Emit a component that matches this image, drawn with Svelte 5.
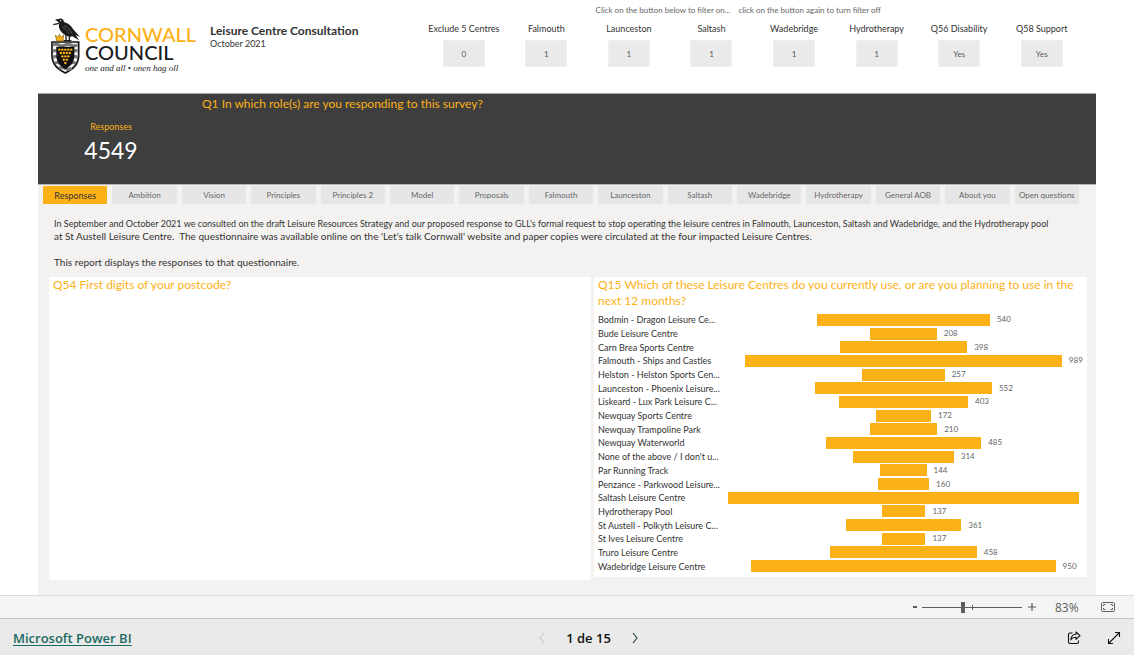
<script>
  const filters = [
    { label: 'Exclude 5 Centres', value: '0' },
    { label: 'Falmouth', value: '1' },
    { label: 'Launceston', value: '1' },
    { label: 'Saltash', value: '1' },
    { label: 'Wadebridge', value: '1' },
    { label: 'Hydrotherapy', value: '1' },
    { label: 'Q56 Disability', value: 'Yes' },
    { label: 'Q58 Support', value: 'Yes' }
  ];

  const tabs = [
    'Responses', 'Ambition', 'Vision', 'Principles', 'Principles 2', 'Model',
    'Proposals', 'Falmouth', 'Launceston', 'Saltash', 'Wadebridge',
    'Hydrotherapy', 'General AOB', 'About you', 'Open questions'
  ];
  let active = $state('Responses');
  let zoom = $state(41);

  const max = 1096;
  const centres = [
    ['Bodmin - Dragon Leisure Ce...', 540],
    ['Bude Leisure Centre', 208],
    ['Carn Brea Sports Centre', 398],
    ['Falmouth - Ships and Castles', 989],
    ['Helston - Helston Sports Cen...', 257],
    ['Launceston - Phoenix Leisure...', 552],
    ['Liskeard - Lux Park Leisure C...', 403],
    ['Newquay Sports Centre', 172],
    ['Newquay Trampoline Park', 210],
    ['Newquay Waterworld', 485],
    ["None of the above / I don't u...", 314],
    ['Par Running Track', 144],
    ['Penzance - Parkwood Leisure...', 160],
    ['Saltash Leisure Centre', 1096],
    ['Hydrotherapy Pool', 137],
    ['St Austell - Polkyth Leisure C...', 361],
    ['St Ives Leisure Centre', 137],
    ['Truro Leisure Centre', 458],
    ['Wadebridge Leisure Centre', 950]
  ];

  // Gold roundels on the shield: rows of 5, 4, 3, 2, 1
  const roundels = [5, 4, 3, 2, 1].flatMap((n, r) =>
    Array.from({ length: n }, (_, i) => ({ x: 43 + (i - (n - 1) / 2) * 9, y: 95 + r * 10 }))
  );
</script>

<div class="page">
  <main class="report">
    <header class="top">
      <div class="logo">
        <svg class="crest" viewBox="0 0 90 168" aria-hidden="true">
          <path d="M3 72H83V112C83 138 68 154 43 165C18 154 3 138 3 112Z" fill="#f4f4f4" stroke="#111" stroke-width="5" />
          <path d="M6 81q9-5 18 0t18 0t18 0t20 0M6 100q8-5 14 0M66 100q8-5 14 0M6 118q8-5 15 0M65 118q8-5 14 0M11 136q8-5 17 0M57 136q9-5 17 0M24 151q9-5 19 0t19 0" fill="none" stroke="#777" stroke-width="9" />
          <path d="M16 86H70V110C70 132 60 144 43 153C26 144 16 132 16 110Z" fill="#111" />
          {#each roundels as c}
            <circle cx={c.x} cy={c.y} r="3.600" fill="#fcb116" />
          {/each}
          <path d="M13 51L20 58L25 49L30 58L38 51L36 69H17Z" fill="#fcb116" stroke="#8a610c" stroke-width="2" />
          <path d="M12 6C16 3 20 2 24 3C32 -1 38 5 39 12C50 15 60 22 66 33L87 57L74 51L84 67L64 55C54 58 44 53 38 48C27 40 20 26 25 16C21 10 17 8 12 6Z" fill="#1b1b1d" />
          <path d="M39 23C50 26 58 36 63 46M33 27C42 30 49 38 54 46" fill="none" stroke="#777" stroke-width="2" />
          <path d="M24 16L7 20M45 49V66M55 52V66M38 68H61" fill="none" stroke="#1b1b1d" stroke-width="4" />
          <circle cx="29" cy="8" r="2" fill="#fff" />
        </svg>
        <div class="wordmark">
          <span class="gold">CORNWALL</span>
          <span>COUNCIL</span>
          <em>one and all • onen hag oll</em>
        </div>
      </div>
      <div class="heading">
        <h1>Leisure Centre Consultation</h1>
        <p>October 2021</p>
      </div>
      <section class="filters" aria-label="Filters">
        <p class="hint"><span>Click on the button below to filter on...</span><span>click on the button again to turn filter off</span></p>
        <div class="filter-grid">
          {#each filters as f, i}
            <div class="filter">
              <span id="filter-{i}">{f.label}</span>
              <button type="button" aria-labelledby="filter-{i}">{f.value}</button>
            </div>
          {/each}
        </div>
      </section>
    </header>

    <section class="band">
      <div class="card">
        <span>Responses</span>
        <strong>4549</strong>
      </div>
      <h2>Q1 In which role(s) are you responding to this survey?</h2>
    </section>

    <section class="body">
      <nav class="tabs" aria-label="Report pages">
        {#each tabs as t}
          <button type="button" class:active={active === t} onclick={() => (active = t)}>{t}</button>
        {/each}
      </nav>

      <div class="intro">
        <p><small>In September and October 2021 we consulted on the draft Leisure Resources Strategy and our proposed response to GLL's formal request to stop operating the leisure centres in Falmouth, Launceston, Saltash and Wadebridge, and the Hydrotherapy pool</small><br />at St Austell Leisure Centre.&nbsp; The questionnaire was available online on the 'Let's talk Cornwall' website and paper copies were circulated at the four impacted Leisure Centres.</p>
        <p>This report displays the responses to that questionnaire.</p>
      </div>

      <div class="panels">
        <section class="panel map">
          <h2>Q54 First digits of your postcode?</h2>
        </section>
        <section class="panel">
          <h2>Q15 Which of these Leisure Centres do you currently use, or are you planning to use in the next 12 months?</h2>
          <ul class="chart">
            {#each centres as [name, n]}
              <li>
                <span class="name">{name}</span>
                <div class="track" style="--w: {(n / max) * 100}%">
                  <span class="bar"></span>
                  {#if n < max}<span class="value">{n}</span>{/if}
                </div>
              </li>
            {/each}
          </ul>
        </section>
      </div>
    </section>
  </main>

  <div class="status">
    <button type="button" class="step" aria-label="Zoom out">
      <svg viewBox="0 0 10 10"><path d="M3 5H7" stroke="#605e5c" stroke-width="2" /></svg>
    </button>
    <input type="range" min="0" max="100" bind:value={zoom} aria-label="Zoom level" />
    <button type="button" class="step" aria-label="Zoom in">
      <svg viewBox="0 0 10 10"><path d="M1 5H9M5 1V9" stroke="#605e5c" stroke-width="1.200" /></svg>
    </button>
    <span class="percent">83%</span>
    <button type="button" class="fit" aria-label="Fit to page">
      <svg viewBox="0 0 14 10" fill="none" stroke="#605e5c">
        <rect x=".5" y=".5" width="13" height="9" rx="1" />
        <path d="M4.500 2.500H2.500V4M2.500 6V7.500H4.500M9.500 2.500H11.500V4M11.500 6V7.500H9.500" />
      </svg>
    </button>
  </div>

  <footer>
    <a href="#powerbi">Microsoft Power BI</a>
    <div class="pager">
      <button type="button" disabled aria-label="Previous page">
        <svg viewBox="0 0 8 12"><path d="M6 1L2 6L6 11" fill="none" stroke="#bdbdbd" /></svg>
      </button>
      <span>1 de 15</span>
      <button type="button" aria-label="Next page">
        <svg viewBox="0 0 8 12"><path d="M2 1L6 6L2 11" fill="none" stroke="#2b4a48" stroke-width="1.200" /></svg>
      </button>
    </div>
    <div class="actions">
      <button type="button" aria-label="Share">
        <svg viewBox="0 0 14 14" fill="none" stroke="#111" stroke-width="1.100" stroke-linejoin="round">
          <path d="M5.500 2H3Q1.500 2 1.500 3.500V11Q1.500 12.500 3 12.500H10Q11.500 12.500 11.500 11V9.500" />
          <path d="M9 1L13 4.700L9 8.300V6.200C6.500 6.100 5 7 3.800 8.800C4.200 5.500 6 3.300 9 3.200Z" />
        </svg>
      </button>
      <button type="button" aria-label="Full screen">
        <svg viewBox="0 0 14 14" fill="none" stroke="#111" stroke-width="1.100">
          <path d="M1.500 12.500L12.500 1.500M8 1.500H12.500V6M1.500 8V12.500H6" />
        </svg>
      </button>
    </div>
  </footer>
</div>

<style>
  :global(body) {
    background: #fff;
  }
  .page {
    min-height: 100vh;
    display: flex;
    flex-direction: column;
    font-family: Lato, 'Liberation Sans', sans-serif;
    color: #333;
  }
  h1, h2, p, ul {
    margin: 0;
    padding: 0;
    font-weight: 400;
  }
  button {
    border: 0;
    padding: 0;
    font: inherit;
    color: inherit;
    background: none;
  }
  svg {
    display: block;
  }
  .report {
    flex: 1;
    margin: 0 38px;
    display: flex;
    flex-direction: column;
  }

  .top {
    display: flex;
    height: 93px;
    padding: 0 13px;
    box-sizing: border-box;
  }
  .logo {
    display: flex;
    gap: 4px;
    padding-top: 18px;
    width: 159px;
    flex: none;
  }
  .crest {
    width: 30px;
    height: 56px;
  }
  .wordmark {
    display: flex;
    flex-direction: column;
    padding-top: 7px;
    font-size: 20px;
    font-weight: 500;
    line-height: 18px;
    color: #1b1b1d;
    white-space: nowrap;
  }
  .gold {
    color: #fcb116;
  }
  .wordmark em {
    padding-top: 1px;
    font: italic 9px/13px 'Liberation Serif', serif;
  }
  .heading {
    flex: 1;
    padding-top: 23px;
    white-space: nowrap;
  }
  h1 {
    font-size: 12px;
    line-height: 15px;
    font-weight: 700;
  }
  .heading p {
    font-size: 9px;
    line-height: 12px;
  }
  .filters {
    width: 64%;
    flex: none;
    padding-top: 4px;
    font-size: 9px;
    line-height: 12px;
  }
  .hint {
    display: flex;
    gap: 8px;
    padding-left: 173px;
    font-size: 8px;
    color: #666;
    white-space: nowrap;
  }
  .filter-grid {
    display: grid;
    grid-template-columns: repeat(8, minmax(0, 1fr));
    padding-top: 7px;
  }
  .filter {
    display: flex;
    flex-direction: column;
    align-items: center;
    gap: 5px;
    white-space: nowrap;
  }
  .filter button {
    width: 42px;
    height: 27px;
    background: #eaeaea;
    border: 1px solid #f0f0f0;
    font-size: 8px;
    color: #555;
  }

  .band {
    display: flex;
    height: 92px;
    box-sizing: border-box;
    background: #3e3e3e;
    border-top: 1px solid #a6a6a6;
    border-bottom: 1px solid #b3b3b3;
    color: #fcb116;
  }
  .card {
    width: 146px;
    margin-right: 18px;
    padding-top: 27px;
    display: flex;
    flex-direction: column;
    align-items: center;
    font-size: 9px;
    line-height: 12px;
  }
  .card strong {
    font-size: 23px;
    line-height: 34px;
    font-weight: 400;
    color: #fff;
  }
  h2 {
    font-size: 12px;
    line-height: 16px;
    color: #fcb116;
  }
  .band h2 {
    padding-top: 2px;
  }

  .body {
    flex: 1;
    display: flex;
    flex-direction: column;
    background: #f3f2f0;
    padding: 1px 9px 15px 5px;
  }
  .tabs {
    display: grid;
    grid-template-columns: repeat(15, minmax(0, 1fr));
    gap: 5px;
    margin-right: 8px;
  }
  .tabs button {
    height: 18px;
    background: #e6e6e6;
    font-size: 8px;
    color: #666;
    white-space: nowrap;
  }
  .tabs .active {
    background: #fcb116;
    color: #333;
    font-size: 9px;
  }
  .intro {
    padding: 13px 0 8px 11px;
    display: flex;
    flex-direction: column;
    gap: 13px;
    font-size: 10px;
    line-height: 13px;
    white-space: nowrap;
  }
  small {
    font-size: 9px;
  }
  .panels {
    flex: 1;
    display: grid;
    grid-template-columns: 542fr 493fr;
    gap: 3px;
    padding-left: 6px;
  }
  .panel {
    display: flex;
    flex-direction: column;
    background: #fff;
    padding: 0 4px;
    margin-bottom: 3px;
  }
  .map {
    margin-bottom: 0;
  }
  .chart {
    flex: 1;
    display: grid;
    grid-auto-rows: minmax(0, 1fr);
    list-style: none;
    padding: 4px 4px 4px 0;
    min-height: 260px;
    font-size: 9px;
    line-height: 13px;
  }
  .chart li {
    display: grid;
    grid-template-columns: 130px minmax(0, 1fr);
    align-items: center;
  }
  .name {
    white-space: nowrap;
  }
  .track {
    display: grid;
    grid-template-columns: minmax(0, 1fr) var(--w) minmax(0, 1fr);
    align-items: center;
  }
  .bar {
    grid-column: 2;
    height: 12px;
    background: #fcb116;
  }
  .value {
    padding-left: 7px;
    font-size: 8px;
    color: #666;
  }

  .status {
    display: flex;
    align-items: center;
    justify-content: flex-end;
    height: 22px;
    padding-right: 19px;
    background: #f4f4f4;
    border-top: 1px solid #dedcda;
    font-family: 'Open Sans', sans-serif;
    font-size: 12px;
    color: #605e5c;
  }
  .step svg {
    width: 10px;
    height: 10px;
  }
  .step {
    margin: 0 2px;
  }
  .fit svg {
    width: 14px;
    height: 10px;
  }
  .percent {
    width: 26px;
    margin: 0 20px 0 16px;
  }
  input {
    appearance: none;
    width: 100px;
    height: 12px;
    margin: 0 3px 0 0;
    background:
      linear-gradient(#605e5c, #605e5c) center / 100% 1px no-repeat,
      linear-gradient(#605e5c, #605e5c) center / 1px 5px no-repeat;
  }
  input::-webkit-slider-thumb {
    appearance: none;
    width: 4px;
    height: 11px;
    background: #605e5c;
  }

  footer {
    display: grid;
    grid-template-columns: minmax(0, 1fr) auto minmax(0, 1fr);
    align-items: center;
    height: 36px;
    padding: 0 13px;
    background: #eaeaea;
    border-top: 1px solid #c8c8c8;
    font-family: 'Open Sans', sans-serif;
    font-size: 13px;
    font-weight: 600;
    color: #111;
    white-space: nowrap;
  }
  footer > * {
    padding-top: 2px;
  }
  a {
    color: #1b6a60;
    text-underline-offset: 2px;
  }
  .pager {
    display: flex;
    align-items: center;
    gap: 20px;
    padding-left: 43px;
  }
  .pager svg {
    width: 8px;
    height: 12px;
  }
  .actions {
    display: flex;
    justify-content: flex-end;
    gap: 26px;
  }
  .actions svg {
    width: 14px;
    height: 14px;
  }
</style>
